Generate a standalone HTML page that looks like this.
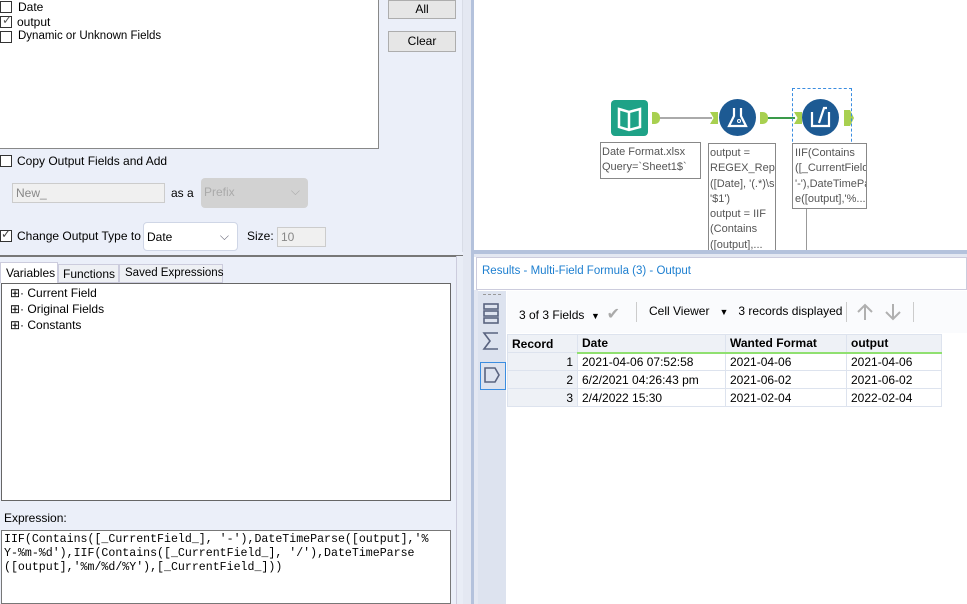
<!DOCTYPE html>
<html><head><style>
*{box-sizing:border-box;margin:0;padding:0}
body{width:967px;height:604px;overflow:hidden;position:relative;background:#fff;font-family:"Liberation Sans",Tahoma,sans-serif;font-size:12px;color:#000}
.a{position:absolute}
.cb{position:absolute;width:12px;height:12px;border:1px solid #333;background:#fff}
.btn{position:absolute;background:#e6e6e6;border:1px solid #adadad;text-align:center;font-size:12px;line-height:17px}
.seg{font-family:"Liberation Sans",sans-serif;font-size:12px;white-space:nowrap}
td{border:1px solid #dde3ee;padding:0 4px;height:18px;font-size:12px;white-space:nowrap}
</style></head><body>
<div class="a" style="left:0;top:0;width:463px;height:604px;background:#ebeff9"></div>
<div class="a" style="left:0;top:0;width:379px;height:149px;background:#fff;border-right:1px solid #888;border-bottom:1px solid #888"></div>
<div class="cb" style="left:0;top:1px"></div><div class="a" style="left:18px;top:0">Date</div>
<div class="cb" style="left:0;top:16px"></div><div class="a" style="left:2px;top:13px;font-size:12px;color:#555">✓</div><div class="a" style="left:17px;top:15px">output</div>
<div class="cb" style="left:0;top:31px"></div><div class="a" style="left:18px;top:30px;font-size:11.5px">Dynamic or Unknown Fields</div>
<div class="btn" style="left:388px;top:0;width:68px;height:19px">All</div>
<div class="btn" style="left:388px;top:31px;width:68px;height:21px;line-height:19px">Clear</div>
<div class="a" style="left:462px;top:0;width:1px;height:252px;background:#d8dce6"></div>
<div class="cb" style="left:0;top:155px"></div><div class="a" style="left:17px;top:154px">Copy Output Fields and Add</div>
<div class="a" style="left:12px;top:183px;width:153px;height:20px;background:#f0f0f0;border:1px solid #ccc;color:#888;padding:2px 3px">New_</div>
<div class="a" style="left:171px;top:186px">as a</div>
<div class="a" style="left:201px;top:178px;width:107px;height:30px;background:#d2d2d2;border-radius:4px;color:#aaa;padding:7px 3px">Prefix<span style="position:absolute;right:8px;top:6px">⌵</span></div>
<div class="cb" style="left:0;top:230px"></div><div class="a" style="left:1px;top:227px;color:#444">✓</div><div class="a" style="left:17px;top:229px">Change Output Type to</div>
<div class="a" style="left:143px;top:222px;width:95px;height:29px;background:#fff;border:1px solid #cfd6e6;border-radius:4px;padding:7px 3px">Date<span style="position:absolute;right:8px;top:6px;color:#667">⌵</span></div>
<div class="a" style="left:247px;top:229px">Size:</div>
<div class="a" style="left:277px;top:227px;width:49px;height:20px;background:#f0f0f0;border:1px solid #ccc;color:#888;padding:2px 3px">10</div>
<div class="a" style="left:0;top:255px;width:463px;height:2px;background:#777"></div>
<div class="a seg" style="left:0;top:262px;width:58px;height:21px;background:#fff;border:1px solid #ccd;border-bottom:none;padding:3px 5px">Variables</div>
<div class="a seg" style="left:58px;top:264px;width:61px;height:19px;background:#eef0f4;border:1px solid #ccd;padding:2px 4px">Functions</div>
<div class="a seg" style="left:119px;top:264px;width:104px;height:19px;background:#eef0f4;border:1px solid #ccd;padding:2px 5px;font-size:11.5px">Saved Expressions</div>
<div class="a" style="left:1px;top:283px;width:450px;height:218px;background:#fff;border:1px solid #666"></div>
<div class="a seg" style="left:10px;top:285px;line-height:16px">
<div>⊞· Current Field</div><div>⊞· Original Fields</div><div>⊞· Constants</div></div>
<div class="a seg" style="left:4px;top:511px">Expression:</div>
<div class="a" style="left:1px;top:530px;width:450px;height:74px;background:#fff;border:1px solid #777"></div>
<div class="a" style="left:4px;top:533px;font-family:'Liberation Mono',monospace;font-size:11.6px;line-height:14px;white-space:pre">IIF(Contains([_CurrentField_], '-'),DateTimeParse([output],'%
Y-%m-%d'),IIF(Contains([_CurrentField_], '/'),DateTimeParse
([output],'%m/%d/%Y'),[_CurrentField_]))</div>
<div class="a" style="left:456px;top:256px;width:7px;height:348px;background:#e9edf6;border-left:1px solid #ccd"></div>
<div class="a" style="left:463px;top:0;width:10px;height:604px;background:#e4e8f2"></div>
<div class="a" style="left:471px;top:0;width:3px;height:604px;background:#b4c2dc"></div>
<div class="a" style="left:474px;top:250px;width:493px;height:4px;background:#b4c2dc"></div>
<div class="a" style="left:474px;top:254px;width:493px;height:3px;background:#e4e8f2"></div>
<div class="a" style="left:660px;top:117px;width:52px;height:2px;background:#aaa"></div>
<div class="a" style="left:765px;top:117px;width:30px;height:2px;background:#3a9a4a"></div>
<div class="a" style="left:611px;top:100px;width:37px;height:36px;background:#1ea287;border-radius:4px"></div>
<svg class="a" style="left:611px;top:100px" width="37" height="36" viewBox="0 0 37 36"><path d="M8 9 L18 12 L29 9 L29 27 L18 30 L8 27Z M18 12 L18 30" fill="none" stroke="#fff" stroke-width="2.5"/></svg>
<div class="a" style="left:652px;top:112px;width:8px;height:12px;background:#a8d050;border-radius:0 5px 5px 0"></div>
<div class="a" style="left:710px;top:112px;width:8px;height:12px;background:#a8d050;clip-path:polygon(0 0,100% 0,100% 100%,0 100%,45% 50%)"></div>
<div class="a" style="left:719px;top:99px;width:37px;height:37px;background:#1d5a93;border-radius:50%"></div>
<svg class="a" style="left:719px;top:99px" width="37" height="37"><path d="M15 9 L15 17 L10 27 L27 27 L22 17 L22 9" fill="none" stroke="#fff" stroke-width="2.2"/><circle cx="20" cy="22" r="1.5" fill="#1d5a93" stroke="#fff"/></svg>
<div class="a" style="left:760px;top:112px;width:8px;height:12px;background:#a8d050;border-radius:0 5px 5px 0"></div>
<div class="a" style="left:794px;top:112px;width:8px;height:12px;background:#a8d050;clip-path:polygon(0 0,100% 0,100% 100%,0 100%,45% 50%)"></div>
<div class="a" style="left:802px;top:99px;width:37px;height:37px;background:#1d5a93;border-radius:50%"></div>
<svg class="a" style="left:802px;top:99px" width="37" height="37"><path d="M10 13 L10 27 L27 27 L27 13 M17 24 L22 9 L25 9" fill="none" stroke="#fff" stroke-width="2.2"/></svg>
<div class="a" style="left:844px;top:110px;width:10px;height:16px;background:#a8d050;clip-path:polygon(0 0,60% 0,100% 50%,60% 100%,0 100%)"></div>
<div class="a" style="left:792px;top:88px;width:60px;height:74px;border:1px dashed #3b8de0"></div>
<div class="a" style="left:600px;top:142px;width:101px;height:37px;background:#fff;border:1px solid #888;color:#555;font-size:11px;line-height:15px;padding:2px 1px">Date Format.xlsx<br>Query=`Sheet1$`</div>
<div class="a" style="left:708px;top:143px;width:68px;height:107px;background:#fff;border:1px solid #888;border-bottom:none;color:#555;font-size:11px;line-height:15.3px;padding:2px 1px;overflow:hidden;white-space:nowrap">output =<br>REGEX_Replace<br>([Date], '(.*)\s.*'<br>'$1')<br>output = IIF<br>(Contains<br>([output],...</div>
<div class="a" style="left:806px;top:209px;width:1px;height:41px;background:#999"></div>
<div class="a" style="left:792px;top:143px;width:75px;height:66px;background:#fff;border:1px solid #888;color:#555;font-size:11px;line-height:15.3px;padding:2px 2px;overflow:hidden;white-space:nowrap">IIF(Contains<br>([_CurrentField_],<br>'-'),DateTimePars<br>e([output],'%...</div>
<div class="a" style="left:476px;top:257px;width:491px;height:33px;background:#fff;border:1px solid #ccd"></div>
<div class="a" style="left:482px;top:265px;color:#1d7fd0;font-size:11.5px">Results - Multi-Field Formula (3) - Output</div>
<div class="a" style="left:474px;top:290px;width:4px;height:314px;background:#e4e8f2"></div>
<div class="a" style="left:478px;top:291px;width:28px;height:313px;background:#dde3ef"></div>
<div class="a" style="left:483px;top:294px;width:18px;border-top:1px dashed #999"></div>
<svg class="a" style="left:482px;top:302px" width="20" height="90"><g fill="none" stroke="#5a6480" stroke-width="1.6"><rect x="2" y="2" width="14" height="5"/><rect x="2" y="9" width="14" height="5"/><rect x="2" y="16" width="14" height="5"/><path d="M16 31 L2 31 L8 39 L2 47 L16 47"/><path d="M3 66 L13 66 L17 73 L13 80 L3 80Z"/></g></svg>
<div class="a" style="left:480px;top:362px;width:26px;height:28px;border:1px solid #3b8de0"></div>
<div class="a" style="left:507px;top:291px;width:460px;height:313px;background:#fff"></div>
<div class="a" style="left:507px;top:291px;width:460px;height:42px;background:#fafbfd"></div>
<div class="a seg" style="left:519px;top:304px">3 of 3 Fields &nbsp;<span style="font-size:9px">▼</span>&nbsp; <span style="color:#aaa;font-size:16px">✔</span></div>
<div class="a" style="left:636px;top:302px;width:1px;height:20px;background:#ccc"></div>
<div class="a seg" style="left:649px;top:304px">Cell Viewer &nbsp;&nbsp;<span style="font-size:9px">▼</span>&nbsp;&nbsp; 3 records displayed</div>
<div class="a" style="left:846px;top:302px;width:1px;height:20px;background:#ccc"></div>
<svg class="a" style="left:855px;top:302px" width="50" height="20"><g fill="none" stroke="#b0b0b0" stroke-width="2"><path d="M10 18 L10 3 M3 10 L10 3 L17 10"/><path d="M38 2 L38 17 M31 10 L38 17 L45 10"/></g></svg>
<div class="a" style="left:913px;top:302px;width:1px;height:20px;background:#ccc"></div>
<table class="a seg" style="left:507px;top:334px;border-collapse:collapse;width:435px">
<tr style="background:#eef1f6;font-weight:bold"><td style="width:70px">Record</td><td style="width:148px;border-bottom:2px solid #90e070">Date</td><td style="width:121px;border-bottom:2px solid #90e070">Wanted Format</td><td style="border-bottom:2px solid #90e070">output</td></tr>
<tr><td style="text-align:right;background:#eef1f6">1</td><td>2021-04-06 07:52:58</td><td>2021-04-06</td><td>2021-04-06</td></tr>
<tr><td style="text-align:right;background:#eef1f6">2</td><td>6/2/2021 04:26:43 pm</td><td>2021-06-02</td><td>2021-06-02</td></tr>
<tr><td style="text-align:right;background:#eef1f6">3</td><td>2/4/2022 15:30</td><td>2021-02-04</td><td>2022-02-04</td></tr>
</table>
</body></html>
